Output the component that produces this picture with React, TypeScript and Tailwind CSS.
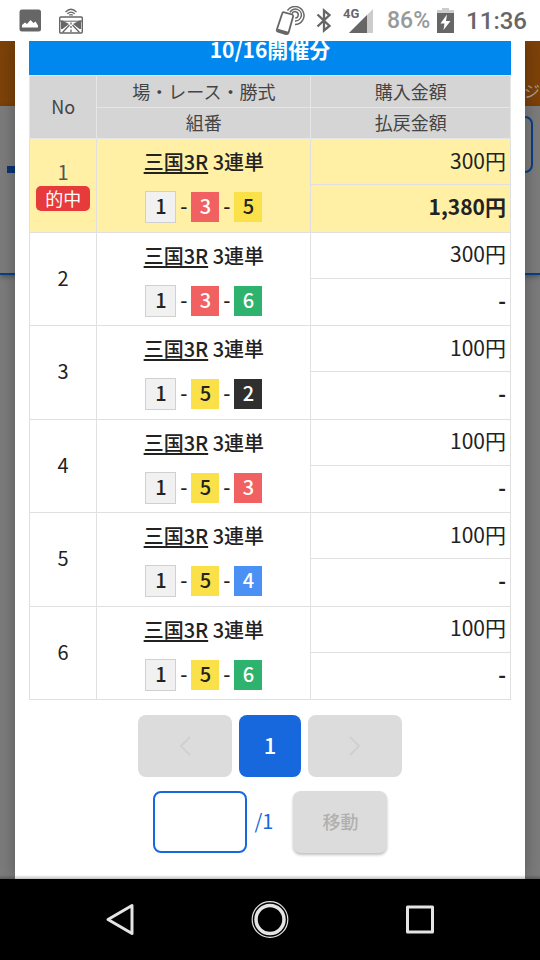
import type { ReactNode } from "react";

type Bet = { no: number; amount: string; payout: string; picks: number[]; hit?: boolean };

const bets: Bet[] = [
  { no: 1, amount: "300円", payout: "1,380円", picks: [1, 3, 5], hit: true },
  { no: 2, amount: "300円", payout: "-", picks: [1, 3, 6] },
  { no: 3, amount: "100円", payout: "-", picks: [1, 5, 2] },
  { no: 4, amount: "100円", payout: "-", picks: [1, 5, 3] },
  { no: 5, amount: "100円", payout: "-", picks: [1, 5, 4] },
  { no: 6, amount: "100円", payout: "-", picks: [1, 5, 6] },
];

const boatStyles: Record<number, string> = {
  1: "w-[31px] h-8 border border-[#d0d0d0] bg-[#f1f1f1] text-[#222]",
  2: "w-7 h-[30px] bg-[#2f2f2f] text-white",
  3: "w-7 h-[30px] bg-[#f26161] text-white",
  4: "w-7 h-[30px] bg-[#4a90f5] text-white",
  5: "w-7 h-[30px] bg-[#fae14a] text-[#222]",
  6: "w-7 h-[30px] bg-[#2eb36f] text-white",
};

const cell = "border border-[#e0e0e0] p-0";
const headCell = "border border-[#e6e6e6] p-0 pb-0.5 text-lg font-normal leading-7";

function StatusBar() {
  return (
    <header className="flex h-[41px] shrink-0 items-center bg-white pl-[19px] pr-[13px] font-['Roboto',sans-serif] text-[#666]">
      <svg className="mr-[18px]" width="22" height="23" viewBox="0 0 22 23" aria-hidden="true">
        <rect x="0.5" y="0.5" width="21.5" height="22" rx="2.500" fill="#666" />
        <path d="M3 18.500V16l3-2.500 2 1.500 3.500-4 3 3 2-1.500 2.500 4v2z" fill="#fff" />
      </svg>
      <svg width="24" height="26" viewBox="0 0 24 26" fill="none" stroke="#666" aria-hidden="true">
        <path d="M6.500 4Q12 -1.500 17.500 4M8.300 5.800Q12 2.400 15.700 5.800M10.200 7.300Q12 5.800 13.800 7.300" strokeWidth="1.200" />
        <rect x="0.700" y="9" width="22.600" height="16" rx="1" strokeWidth="1.400" />
        <path d="M1 12.500h2.500l6.500 3.500-6.500 5H2V13zM23 12.500h-2.500L14 16l6.500 5H22V13z" fill="#666" stroke="none" />
        <path d="M1 13.200h22" strokeWidth="1" />
        <path d="M12 14.500v2M12 18v2M12 21.500v2.500M10.500 17L3.500 24.500M13.500 17l7 7.500" strokeWidth="1.300" />
      </svg>
      <div className="ml-auto flex items-center">
        <svg className="mr-[11px]" width="30" height="30" viewBox="0 0 30 30" fill="none" stroke="#666" aria-hidden="true">
          <path d="M7.200 7.500Q7.700 5.800 9.300 6.300L17 8.500Q18.500 9 18.100 10.500L13.600 26.500Q13 28.600 11 28.100L3 25.600Q1.400 25 1.900 23.400z" strokeWidth="1.800" />
          <path d="M2.500 24l10.500 3" strokeWidth="2.500" />
          <path d="M12.500 4.500A9 9 0 1 1 20 18.500M15 6.300A6 6 0 1 1 20 15M17 7.800A3.200 3.200 0 1 1 20.300 12" strokeWidth="1.500" />
        </svg>
        <svg className="mr-[11px]" width="16" height="25" viewBox="0 0 16 25" fill="none" stroke="#666" strokeWidth="2.300" aria-hidden="true">
          <path d="M1.500 6.500L13.500 18 8 22.500V2.500L13.500 7 1.500 18.500" />
        </svg>
        <div className="mr-3.5 flex w-[30px] items-start">
          <span className="text-[13px] font-bold leading-3">4G</span>
          <svg className="-ml-2.5 mt-px shrink-0" width="24" height="24" viewBox="0 0 24 24" aria-hidden="true">
            <path d="M24 0v24H0z" fill="#ccc" />
            <path d="M18 6v18H0z" fill="#666" />
          </svg>
        </div>
        <span className="mr-[7px] text-[23px] font-medium leading-8 text-[#999]">86%</span>
        <svg className="mr-3" width="17" height="25" viewBox="0 0 17 25" aria-hidden="true">
          <path d="M5 0h7v2h5v4H0V2h5z" fill="#ccc" />
          <path d="M0 5h17v20H0z" fill="#666" />
          <path d="M10 6.500L3.500 15.500h4L6.500 22l7-9h-4.500z" fill="#fff" />
        </svg>
        <span className="text-2xl font-medium leading-8">11:36</span>
      </div>
    </header>
  );
}

function DimmedPage() {
  return (
    <div className="absolute inset-0 flex flex-col bg-[#7c7c7c]" aria-hidden="true">
      <div className="flex h-[65px] shrink-0 items-end justify-end bg-[#7d4209] pb-1 text-base text-[#a9a29b]">ジ</div>
      <div className="flex h-[169px] shrink-0 items-start justify-between border-b-2 border-[#0b3f86] px-[7px] pt-2.5 shadow-[0_2px_5px_rgba(0,0,0,0.3)]">
        <div className="mt-[50px] h-[7px] w-24 bg-[#0b3572]" />
        <div className="h-[57px] w-24 rounded-lg border-2 border-[#0b3f86]" />
      </div>
    </div>
  );
}

function Boat({ n }: { n: number }) {
  return <span className={`flex items-center justify-center pb-0.5 text-xl font-medium leading-none ${boatStyles[n]}`}>{n}</span>;
}

function BetRows({ bet }: { bet: Bet }) {
  return (
    <tbody className={bet.hit ? "bg-[#fff0a5]" : "bg-white"}>
      <tr className="h-[46px]">
        <td rowSpan={2} className={`${cell} pb-0.5 text-center text-xl`}>
          <div className={bet.hit ? "leading-7 text-[#555]" : "leading-7"}>{bet.no}</div>
          {bet.hit && <span className="mx-1.5 block rounded-[5px] bg-[#e73a3a] text-lg leading-[25px] text-white">的中</span>}
        </td>
        <td rowSpan={2} className={cell}>
          <div className="flex flex-col items-center gap-3.5">
            <div className="text-xl font-medium leading-[30px]">
              <a href="#race" className="underline decoration-2 underline-offset-2">三国3R</a> 3連単
            </div>
            <div className="flex h-8 items-center text-xl font-medium leading-none">
              <Boat n={bet.picks[0]} />
              <span className="w-[15px] pb-0.5 text-center">-</span>
              <Boat n={bet.picks[1]} />
              <span className="w-[15px] pb-0.5 text-center">-</span>
              <Boat n={bet.picks[2]} />
            </div>
          </div>
        </td>
        <td className={`${cell} pb-1 pr-1 text-right text-[21px] leading-8`}>{bet.amount}</td>
      </tr>
      <tr className="h-[47px]">
        <td className={`${cell} pb-1 pr-1 text-right text-[21px] font-bold leading-8`}>{bet.payout}</td>
      </tr>
    </tbody>
  );
}

function PagerButton({ label, children }: { label: string; children: ReactNode }) {
  return (
    <button type="button" disabled aria-label={label} className="flex h-[62px] w-[94px] items-center justify-center rounded-lg bg-[#dcdcdc] text-[#d0d0d0]">
      {children}
    </button>
  );
}

export default function App() {
  return (
    <div className="flex h-screen flex-col overflow-hidden bg-black font-['Noto_Sans_CJK_JP',sans-serif] text-[#222]">
      <StatusBar />
      <main className="relative flex min-h-0 flex-1 flex-col overflow-hidden">
        <DimmedPage />
        <section className="relative mx-[15px] flex-1 bg-white px-3.5 shadow-[0_0_16px_rgba(0,0,0,0.3)]">
          <h1 className="h-[34px] bg-[#0088ee] text-center text-[21px] font-bold leading-4 text-white">10/16開催分</h1>
          <table className="h-[625px] w-full table-fixed border-collapse">
            <colgroup>
              <col className="w-[14%]" />
              <col />
              <col className="w-[41.5%]" />
            </colgroup>
            <thead className="bg-[#d5d5d5] text-[#444]">
              <tr className="h-8">
                <th rowSpan={2} className={headCell}>No</th>
                <th className={headCell}>場・レース・勝式</th>
                <th className={headCell}>購入金額</th>
              </tr>
              <tr className="h-[31px]">
                <th className={headCell}>組番</th>
                <th className={headCell}>払戻金額</th>
              </tr>
            </thead>
            {bets.map((bet) => (
              <BetRows key={bet.no} bet={bet} />
            ))}
          </table>
          <nav className="mt-[15px] flex justify-center gap-[7px]" aria-label="ページ">
            <PagerButton label="前へ">
              <svg width="12" height="20" viewBox="0 0 12 20" fill="none" stroke="currentColor" strokeWidth="2">
                <path d="M11 1L2 10l9 9" />
              </svg>
            </PagerButton>
            <button type="button" aria-current="page" className="h-[62px] w-[62px] rounded-lg bg-[#1768dc] pb-1 text-[22px] font-medium text-white">1</button>
            <PagerButton label="次へ">
              <svg width="12" height="20" viewBox="0 0 12 20" fill="none" stroke="currentColor" strokeWidth="2">
                <path d="M1 1l9 9-9 9" />
              </svg>
            </PagerButton>
          </nav>
          <form className="mt-3.5 flex items-center justify-center">
            <input id="page" type="text" inputMode="numeric" className="h-[62px] w-[94px] rounded-lg border-2 border-[#1768dc] bg-white px-3 text-xl outline-none" />
            <label htmlFor="page" className="ml-2 mr-5 pb-0.5 text-xl text-[#1768dc]">/1</label>
            <button type="button" disabled className="h-[62px] w-[94px] rounded-lg bg-[#dcdcdc] pb-0.5 text-lg font-medium text-[#b0b0b0] shadow-[0_2px_3px_rgba(0,0,0,0.25)]">移動</button>
          </form>
        </section>
        <div className="absolute inset-x-0 bottom-0 h-1 bg-linear-to-b from-transparent to-black/25" />
      </main>
      <nav className="flex h-[81px] shrink-0 items-center justify-between bg-black px-[100px]" aria-label="システム">
        <button type="button" aria-label="戻る">
          <svg width="40" height="40" viewBox="0 0 40 40" fill="none" stroke="#e4e4e4" strokeWidth="3" strokeLinejoin="round">
            <path d="M32 5.500v28L8 19.500z" />
          </svg>
        </button>
        <button type="button" aria-label="ホーム">
          <svg width="40" height="40" viewBox="0 0 40 40" fill="none" stroke="#e4e4e4">
            <circle cx="20" cy="19.500" r="17.800" strokeWidth="1.200" />
            <circle cx="20" cy="19.500" r="14" strokeWidth="3.500" />
          </svg>
        </button>
        <button type="button" aria-label="履歴">
          <svg width="40" height="40" viewBox="0 0 40 40" fill="none" stroke="#e4e4e4" strokeWidth="3" strokeLinejoin="round">
            <rect x="7.500" y="7" width="25" height="25" />
          </svg>
        </button>
      </nav>
    </div>
  );
}
